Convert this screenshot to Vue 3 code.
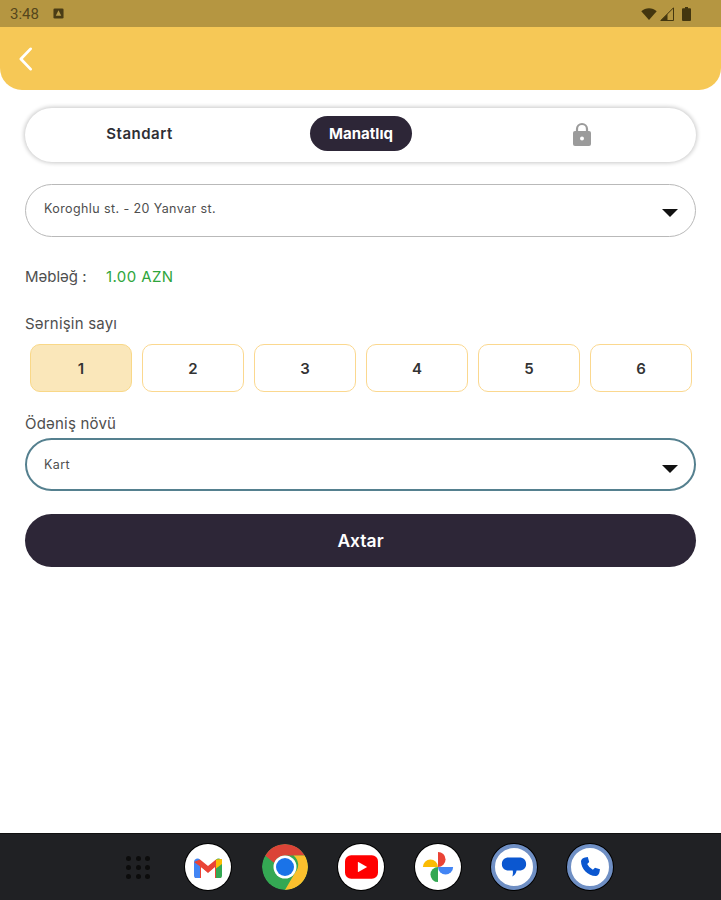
<script setup>
const seats = [1, 2, 3, 4, 5, 6]
</script>

<template>
  <div class="screen">
    <div class="status">
      <span class="time">3:48</span>
      <svg class="note" viewBox="0 0 12 12" width="11" height="11"><rect x="0.5" y="0.5" width="11" height="11" rx="1.5" fill="#4a3c15"/><path d="M6 2.5 9 8.5H3Z" fill="#b59a4a"/></svg>
      <span class="status-right">
        <svg viewBox="0 0 16 12" width="16" height="12"><path d="M0.3 3.2C2.5 1.2 5.1 0.2 8 0.2s5.500 1 7.700 3L8 12Z" fill="#43360f"/></svg>
        <svg viewBox="0 0 14 14" width="14" height="14"><path d="M13.500 0.800V13.500H0.800Z" fill="none" stroke="#43360f" stroke-width="1"/><path d="M7.500 7V13.500H0.800L7.500 7Z" fill="#43360f"/></svg>
        <svg class="batt" viewBox="0 0 9 14" width="9" height="14"><path d="M3 0h3v1.300h2a1 1 0 0 1 1 1V13a1 1 0 0 1-1 1H1a1 1 0 0 1-1-1V2.300a1 1 0 0 1 1-1h2Z" fill="#43360f"/></svg>
      </span>
    </div>

    <header class="top">
      <svg viewBox="0 0 16 26" width="15" height="24"><path d="M13.500 2 3 13l10.500 11" fill="none" stroke="#fff" stroke-width="3" stroke-linecap="round" stroke-linejoin="round"/></svg>
    </header>

    <main class="content">
      <div class="tabs">
        <div class="tab"><span class="tab-text">Standart</span></div>
        <div class="tab"><span class="pill">Manatlıq</span></div>
        <div class="tab">
          <svg class="lock" viewBox="0 0 20 24" width="20" height="24"><path d="M5 10V7a5 5 0 0 1 10 0v3" fill="none" stroke="#9b9b9b" stroke-width="2.200"/><rect x="1" y="9" width="18" height="15" rx="2" fill="#9b9b9b"/><circle cx="10" cy="16.500" r="2" fill="#fff"/></svg>
        </div>
      </div>

      <div class="select">
        <span>Koroghlu st. - 20 Yanvar st.</span>
        <i class="caret"></i>
      </div>

      <div class="amount">
        <span class="amount-label">Məbləğ :</span>
        <span class="amount-value">1.00 AZN</span>
      </div>

      <div class="label seat-label">Sərnişin sayı</div>
      <div class="seats">
        <div v-for="n in seats" :key="n" class="seat" :class="{ active: n === 1 }">{{ n }}</div>
      </div>

      <div class="label pay-label">Ödəniş növü</div>
      <div class="select focus">
        <span>Kart</span>
        <i class="caret"></i>
      </div>

      <button class="search">Axtar</button>
    </main>

    <nav class="dock">
      <div class="grid-icon"><i v-for="n in 9" :key="n"></i></div>

      <div class="app white">
        <svg viewBox="0 0 32 24" width="32" height="24">
          <path d="M3 23V6l13 10L29 6v17h-6V12l-7 6-7-6v11Z" fill="#ea4335"/>
          <path d="M2 7a3.500 3.500 0 0 1 6-2.500V23H4a2 2 0 0 1-2-2Z" fill="#4285f4"/>
          <path d="M30 7a3.500 3.500 0 0 0-6-2.500V23h4a2 2 0 0 0 2-2Z" fill="#34a853"/>
          <path d="M24 4.500 30 4v5l-6 4.500Z" fill="#fbbc04"/>
          <path d="M2 7 8 4.500 16 11l8-6.500v6L16 17 2 7Z" fill="#ea4335"/>
        </svg>
      </div>

      <div class="app chrome">
        <svg viewBox="0 0 46 46" width="46" height="46">
          <circle cx="23" cy="23" r="23" fill="#34a853"/>
          <path d="M23 0a23 23 0 0 1 19.900 11.500H23a11.500 11.500 0 0 0-10.800 7.600L3.100 11.500A23 23 0 0 1 23 0Z" fill="#db4437"/>
          <path d="M42.900 11.500A23 23 0 0 1 23 46l10-17.300a11.500 11.500 0 0 0-1.500-17.200Z" fill="#fbc02d"/>
          <circle cx="23" cy="23" r="11.500" fill="#fff"/>
          <circle cx="23" cy="23" r="9" fill="#1a73e8"/>
        </svg>
      </div>

      <div class="app white">
        <svg viewBox="0 0 32 23" width="33" height="24">
          <rect width="32" height="23" rx="6" fill="#f00"/>
          <path d="M12.500 6.500 21.500 11.500 12.500 16.500Z" fill="#fff"/>
        </svg>
      </div>

      <div class="app white">
        <svg viewBox="0 0 36 36" width="32" height="32">
          <path d="M18 18H1a8.500 8.500 0 0 1 17 0Z" fill="#fbbc04"/>
          <path d="M18 18V1a8.500 8.500 0 0 1 0 17Z" fill="#ea4335"/>
          <path d="M18 18h17a8.500 8.500 0 0 1-17 0Z" fill="#4285f4"/>
          <path d="M18 18v17a8.500 8.500 0 0 1 0-17Z" fill="#34a853"/>
        </svg>
      </div>

      <div class="app ringed">
        <svg viewBox="0 0 30 30" width="26" height="26">
          <path d="M9 4h12c5 0 8 3 8 7.500S26 19 21 19h-3c-.5 3-2.500 6-5 7 .8-2 1-5 .5-7H9c-5 0-8-3-8-7.500S4 4 9 4Z" fill="#0b57d0"/>
        </svg>
      </div>

      <div class="app ringed">
        <svg viewBox="0 0 24 24" width="24" height="24">
          <path d="M7 2.500 9.800 2l1.400 5-2 2.100a12 12 0 0 0 5.700 5.700l2.100-2 5 1.400-.5 2.800c-.3 2-1.800 4-3.800 4C10 21 3 14 3 6.300c0-2 2-3.500 4-3.800Z" fill="#0b57d0"/>
        </svg>
      </div>
    </nav>
  </div>
</template>

<style scoped>
.screen {
  width: 721px;
  height: 900px;
  display: flex;
  flex-direction: column;
  background: #fff;
  font-family: "Inter", "Lato", sans-serif;
  color: #2d2a38;
  overflow: hidden;
}
.status {
  height: 27px;
  flex: none;
  box-sizing: border-box;
  padding: 0 30px 0 10px;
  display: flex;
  align-items: center;
  background: #b59641;
  color: #55461c;
  font: 15px "Roboto", sans-serif;
}
.note { margin-left: 14px; }
.status-right { margin-left: auto; display: flex; align-items: center; gap: 3px; }
.batt { margin-left: 5px; }
.top {
  height: 63px;
  flex: none;
  box-sizing: border-box;
  padding: 0 0 0 18px;
  display: flex;
  align-items: center;
  background: #f6c856;
  border-radius: 0 0 22px 22px;
}
.content {
  flex: 1;
  padding: 18px 25px 0;
  display: flex;
  flex-direction: column;
}
.tabs {
  height: 54px;
  box-sizing: border-box;
  display: grid;
  grid-template-columns: 229px 214px 1fr;
  border-radius: 27px;
  background: #fff;
  box-shadow: 0 0 4px 1px rgba(0, 0, 0, .22);
}
.tab { display: flex; align-items: center; justify-content: center; padding-bottom: 3px; }
.tab-text { font-size: 15px; font-weight: 600; letter-spacing: .5px; color: #2f2f35; }
.pill {
  width: 102px;
  height: 35px;
  display: flex;
  align-items: center;
  justify-content: center;
  border-radius: 18px;
  background: #2d2637;
  color: #fff;
  font-size: 15px;
  font-weight: 700;
}
.select {
  height: 53px;
  margin-top: 22px;
  padding: 0 18px;
  box-sizing: border-box;
  display: flex;
  align-items: center;
  justify-content: space-between;
  border: 1px solid #b9b9b9;
  border-radius: 27px;
  font-size: 12.500px;
  letter-spacing: .4px;
  color: #4e4e4e;
}
.select > span { margin-top: -4px; }
.caret {
  width: 0;
  height: 0;
  margin-top: 4px;
  border-left: 8px solid transparent;
  border-right: 8px solid transparent;
  border-top: 8px solid #111;
}
.select .caret { margin-right: -1px; }
.select.focus {
  margin-top: 5px;
  border: 2px solid #55808f;
  padding: 0 17px;
}
.select.focus > span { margin-top: 0; }
.select.focus .caret { margin-top: 8px; }
.amount {
  margin-top: 29px;
  display: flex;
  align-items: center;
  height: 20px;
}
.amount-label { width: 81px; font-size: 15px; color: #4e4e4e; }
.amount-value { font-size: 15px; letter-spacing: .4px; color: #2fa53c; }
.label { font-size: 15px; letter-spacing: .2px; color: #4e4e4e; height: 18px; line-height: 18px; }
.seat-label { margin-top: 29px; }
.seats {
  margin-top: 11px;
  padding: 0 5px;
  display: grid;
  grid-template-columns: repeat(6, 102px);
  gap: 10px;
}
.seat {
  height: 48px;
  box-sizing: border-box;
  display: flex;
  align-items: center;
  justify-content: center;
  border: 1.500px solid #fbd88f;
  border-radius: 10px;
  background: #fff;
  font-size: 15px;
  font-weight: 600;
  color: #333;
}
.seat.active { background: #fae7ba; border-color: #f9d888; }
.pay-label { margin-top: 23px; }
.search {
  height: 53px;
  margin-top: 23px;
  border: 0;
  border-radius: 27px;
  background: #2d2637;
  color: #fff;
  font-family: inherit;
  font-size: 17.500px;
  font-weight: 600;
}
.dock {
  height: 67px;
  flex: none;
  box-sizing: border-box;
  padding: 0 0 0 126px;
  display: flex;
  align-items: center;
  gap: 30.400px;
  background: #202124;
  border-top: 1px solid #111;
}
.grid-icon {
  width: 24px;
  display: grid;
  grid-template-columns: repeat(3, 5px);
  justify-content: space-between;
  row-gap: 4px;
  margin-right: 5px;
}
.grid-icon i { height: 5px; border-radius: 50%; background: #0c0c0c; }
.app {
  width: 46px;
  height: 46px;
  flex: none;
  box-sizing: border-box;
  display: flex;
  align-items: center;
  justify-content: center;
  border-radius: 50%;
  overflow: hidden;
}
.white { background: #fff; box-shadow: 0 0 0 1px #000; }
.ringed { background: #fff; border: 4px solid #6f8fc4; box-shadow: 0 0 0 1px #000; }
</style>
